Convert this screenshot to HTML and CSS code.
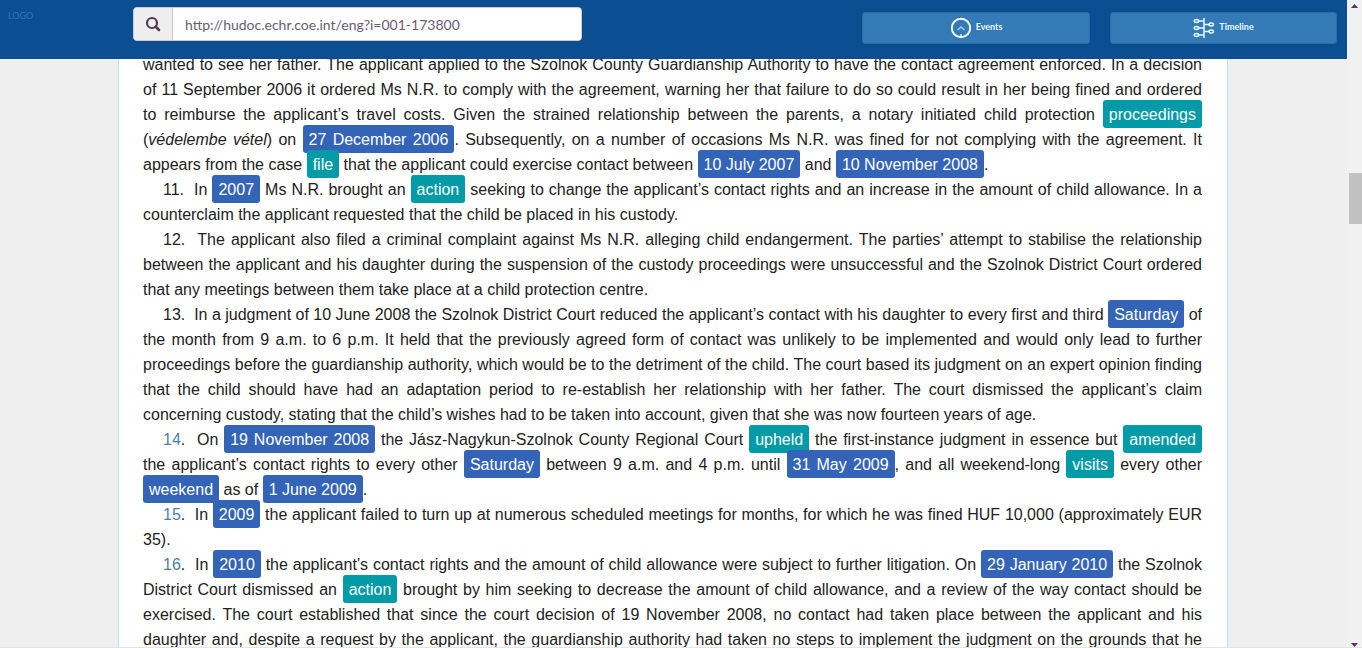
FILE: index.html
```html
<!DOCTYPE html>
<html lang="en">
<head>
<meta charset="utf-8">
<title>Judgment timeline</title>
<link rel="stylesheet" href="styles.css">
</head>
<body>
<div class="app">
  <div class="page">
    <header class="topbar">
      <a class="logo" href="#">LOGO</a>
      <form class="search">
        <button class="search-button" type="button" aria-label="Search">
          <svg width="16" height="16" viewBox="0 0 16 16" fill="none" stroke="#5a3560"><circle cx="7" cy="7" r="5" stroke-width="2.200"/><path d="M10.800 10.800l3.200 3.200" stroke-width="2.700" stroke-linecap="round"/></svg>
        </button>
        <input class="search-input" type="text" aria-label="Document address" value="http://hudoc.echr.coe.int/eng?i=001-173800">
      </form>
      <button class="tool events" type="button">
        <svg width="22" height="22" viewBox="0 0 22 22" fill="none" stroke="#fff"><circle cx="11" cy="11" r="9.200" stroke-width="1.900"/><path d="M7.500 13l3.500-3 3.500 3" stroke="#a9cde8" stroke-width="1.500"/><path d="M11 17v3" stroke-width="1.200"/></svg>
        <span>Events</span>
      </button>
      <button class="tool timeline" type="button">
        <svg width="22" height="22" viewBox="0 0 22 22" fill="none" stroke="#e4fbff" stroke-width="1.500"><path d="M11 1v20M5 4h6M5 11h6M5 18h6M11 7.500h5M11 14.500h5"/><ellipse cx="3.500" cy="4" rx="2.200" ry="1.500"/><ellipse cx="3.500" cy="11" rx="2.200" ry="1.500"/><ellipse cx="3.500" cy="18" rx="2.200" ry="1.500"/><ellipse cx="18.200" cy="7.500" rx="2.200" ry="1.500"/><ellipse cx="18.200" cy="14.500" rx="2.200" ry="1.500"/></svg>
        <span>Timeline</span>
      </button>
    </header>
    <main class="reader">
      <article class="judgment">
        <p class="continued">wanted to see her father. The applicant applied to the Szolnok County Guardianship Authority to have the contact agreement enforced. In a decision of 11 September 2006 it ordered Ms N.R. to comply with the agreement, warning her that failure to do so could result in her being fined and ordered to reimburse the applicant’s travel costs. Given the strained relationship between the parents, a notary initiated child protection <mark class="event">proceedings</mark> (<i>védelembe vétel</i>) on <mark class="date">27 December 2006</mark>. Subsequently, on a number of occasions Ms N.R. was fined for not complying with the agreement. It appears from the case <mark class="event">file</mark> that the applicant could exercise contact between <mark class="date">10 July 2007</mark> and <mark class="date">10 November 2008</mark>.</p>
        <p>11.&nbsp;&nbsp;In <mark class="date">2007</mark> Ms N.R. brought an <mark class="event">action</mark> seeking to change the applicant’s contact rights and an increase in the amount of child allowance. In a counterclaim the applicant requested that the child be placed in his custody.</p>
        <p>12.&nbsp;&nbsp;The applicant also filed a criminal complaint against Ms N.R. alleging child endangerment. The parties’ attempt to stabilise the relationship between the applicant and his daughter during the suspension of the custody proceedings were unsuccessful and the Szolnok District Court ordered that any meetings between them take place at a child protection centre.</p>
        <p>13.&nbsp;&nbsp;In a judgment of 10 June 2008 the Szolnok District Court reduced the applicant’s contact with his daughter to every first and third <mark class="date">Saturday</mark> of the month from 9 a.m. to 6 p.m. It held that the previously agreed form of contact was unlikely to be implemented and would only lead to further proceedings before the guardianship authority, which would be to the detriment of the child. The court based its judgment on an expert opinion finding that the child should have had an adaptation period to re-establish her relationship with her father. The court dismissed the applicant’s claim concerning custody, stating that the child’s wishes had to be taken into account, given that she was now fourteen years of age.</p>
        <p><a class="number" href="#">14</a>.&nbsp;&nbsp;On <mark class="date">19 November 2008</mark> the Jász-Nagykun-Szolnok County Regional Court <mark class="event">upheld</mark> the first-instance judgment in essence but <mark class="event">amended</mark> the applicant’s contact rights to every other <mark class="date">Saturday</mark> between 9 a.m. and 4 p.m. until <mark class="date">31 May 2009</mark>, and all weekend-long <mark class="event">visits</mark> every other <mark class="date">weekend</mark> as of <mark class="date">1 June 2009</mark>.</p>
        <p><a class="number" href="#">15</a>.&nbsp;&nbsp;In <mark class="date">2009</mark> the applicant failed to turn up at numerous scheduled meetings for months, for which he was fined HUF 10,000 (approximately EUR 35).</p>
        <p class="continues"><a class="number" href="#">16</a>.&nbsp;&nbsp;In <mark class="date">2010</mark> the applicant’s contact rights and the amount of child allowance were subject to further litigation. On <mark class="date">29 January 2010</mark> the Szolnok District Court dismissed an <mark class="event">action</mark> brought by him seeking to decrease the amount of child allowance, and a review of the way contact should be exercised. The court established that since the court decision of 19 November 2008, no contact had taken place between the applicant and his daughter and, despite a request by the applicant, the guardianship authority had taken no steps to implement the judgment on the grounds that he</p>
      </article>
    </main>
  </div>
  <div class="scrollbar" aria-hidden="true">
    <svg width="15" height="17" viewBox="0 0 15 17"><path d="M4 8h7L7.500 4z" fill="#5a3560"/></svg>
    <div class="track"><div class="thumb"></div></div>
    <svg width="15" height="17" viewBox="0 0 15 17"><path d="M4 13h7l-3.500 4z" fill="#5a3560"/></svg>
  </div>
</div>
</body>
</html>
```
FILE: styles.css
```css
* { box-sizing: border-box; }
body {
  margin: 0;
  font-family: Lato, "Liberation Sans", sans-serif;
}
.app {
  display: grid;
  grid-template-columns: minmax(0, 1fr) 15px;
  height: 100vh;
  overflow: hidden;
  background: #efefef;
  border-bottom: 1px solid #e4e4e4;
}
.page {
  display: flex;
  flex-direction: column;
  min-height: 0;
  overflow: hidden;
}
.topbar {
  display: grid;
  grid-template-columns: 125fr 449fr 280fr 228fr 20fr 227fr;
  align-items: start;
  flex: none;
  height: 59px;
  padding: 7px 10px 0 8px;
  background: #0b4f92;
  position: relative;
  z-index: 1;
}
.logo {
  padding-top: 3px;
  font-size: 9px;
  line-height: 12px;
  color: #2f76b5;
  text-decoration: none;
}
.search {
  display: flex;
  height: 34px;
  margin: 0;
  border: 1px solid #ccc;
  border-radius: 4px;
  overflow: hidden;
  background: #fff;
}
.search-button {
  flex: none;
  width: 39px;
  padding: 3px 0 0;
  border: 0;
  border-right: 1px solid #ccc;
  background: #eee;
}
.search-input {
  flex: 1;
  min-width: 0;
  padding: 2px 12px 0;
  border: 0;
  font: 14px/20px Lato, sans-serif;
  color: #6a5c74;
  background: #fff;
}
.tool {
  display: flex;
  align-items: center;
  justify-content: center;
  gap: 4px;
  height: 32px;
  margin-top: 5px;
  padding: 0;
  border: 1px solid #2e6da4;
  border-radius: 3px;
  background: #337ab7;
  color: #e8fbff;
  font: bold 9px/12px Lato, sans-serif;
}
.tool span { padding-bottom: 2px; }
.events { grid-column: 4; }
.timeline { grid-column: 6; }
.reader {
  flex: 1;
  min-height: 0;
  padding: 0 119px 0 118px;
}
.judgment {
  margin-top: -7px;
  padding: 0 25px 0 24px;
  border: solid #b8e6ee;
  border-width: 0 1px;
  background: #fff;
  color: #222;
  font: 16px/25px "Liberation Sans", Arial, sans-serif;
  text-align: justify;
}
.judgment p {
  margin: 0;
  text-indent: 20px;
}
.judgment .continued { text-indent: 0; }
.judgment .continues { text-align-last: justify; }
.number {
  color: #4a7fa8;
  text-decoration: none;
}
mark {
  padding: 6px 6px 5px;
  border-radius: 3px;
  color: #fff;
}
.date { background: #3464b8; }
.event { background: #009ba6; }
.scrollbar {
  display: flex;
  flex-direction: column;
  background: #f1f1f1;
}
.scrollbar svg { flex: none; }
.track {
  flex: 1;
  display: grid;
  grid-template-rows: 156fr 51fr 406fr;
  padding-left: 2px;
}
.thumb {
  grid-row: 2;
  background: #c1c1c1;
}
```
